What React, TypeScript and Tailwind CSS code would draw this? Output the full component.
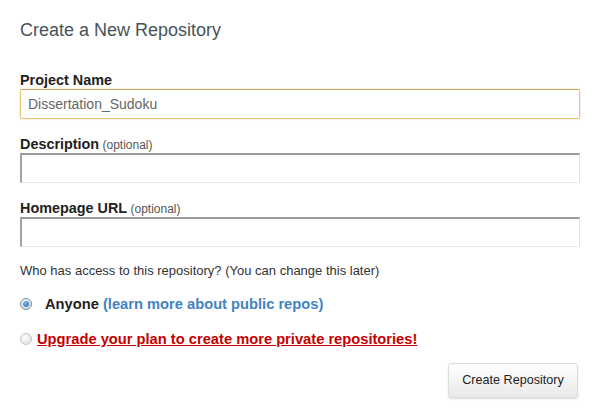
import React from "react";

const font = { fontFamily: '"Liberation Sans", Arial, sans-serif' };

const Label = ({ name, optional }: { name: string; optional?: boolean }) => (
    <div className="h-[18px] leading-[18px] text-[#222]">
        <span className="text-[14.4px] font-bold">{name}</span>
        {optional && <span className="text-[12px] text-[#555]"> (optional)</span>}
    </div>
);

const Radio = ({ checked }: { checked?: boolean }) =>
    checked ? (
        <span className="w-[12px] h-[12px] rounded-full border border-[#7d8a96] bg-[radial-gradient(circle_at_40%_35%,#ffffff,#c9d3dc)] flex items-center justify-center shrink-0">
            <span className="w-[6px] h-[6px] rounded-full bg-[radial-gradient(circle_at_40%_35%,#7fc0f0,#1d5fa3)]" />
        </span>
    ) : (
        <span className="w-[12px] h-[12px] rounded-full border border-[#c4c4c4] bg-[radial-gradient(circle_at_40%_35%,#ffffff,#dcdcdc)] shrink-0" />
    );

export default function App() {
    return (
        <div className="w-[604px] h-[409px] bg-white px-[20px] pt-[20px]" style={font}>
            <h1 className="text-[18px] leading-[21px] text-[#48525a]">Create a New Repository</h1>

            <div className="mt-[30px] w-[560px]">
                <Label name="Project Name" />
                <div className="h-[30px] rounded-[2px] border border-[#e3c47b] border-t-[#bfa465] shadow-[0_0_2px_rgba(226,190,110,0.6)] flex items-center px-[7px] text-[14px] text-[#666]">
                    Dissertation_Sudoku
                </div>
            </div>

            <div className="mt-[16px] w-[560px]">
                <Label name="Description" optional />
                <div className="h-[30px] border-t-2 border-l-2 border-r border-b border-t-[#9b9b9b] border-l-[#a3a3a3] border-r-[#e2e2e2] border-b-[#ececec]" />
            </div>

            <div className="mt-[16px] w-[560px]">
                <Label name="Homepage URL" optional />
                <div className="h-[30px] border-t-2 border-l-2 border-r border-b border-t-[#9b9b9b] border-l-[#a3a3a3] border-r-[#e2e2e2] border-b-[#ececec]" />
            </div>

            <p className="mt-[16px] text-[13px] leading-[16px] text-[#333]">
                Who has access to this repository? (You can change this later)
            </p>

            <div className="mt-[16px] h-[18px] flex items-center">
                <Radio checked />
                <span className="ml-[13px] text-[14.7px] leading-[18px] font-bold text-[#222]">
                    Anyone <span className="text-[#4183c4]">(learn more about public repos)</span>
                </span>
            </div>

            <div className="mt-[17px] h-[18px] flex items-center">
                <Radio />
                <span className="ml-[5px] text-[14.7px] leading-[18px] font-bold text-[#c40000] underline">
                    Upgrade your plan to create more private repositories!
                </span>
            </div>

            <div className="mt-[15px] w-[558px] flex justify-end">
                <button className="w-[130px] h-[35px] rounded-[3px] border border-[#dcdcdc] bg-gradient-to-b from-[#ffffff] to-[#e9e9e9] shadow-[0_1px_2px_rgba(0,0,0,0.15)] text-[12.6px] text-[#222]">
                    Create Repository
                </button>
            </div>
        </div>
    );
}
